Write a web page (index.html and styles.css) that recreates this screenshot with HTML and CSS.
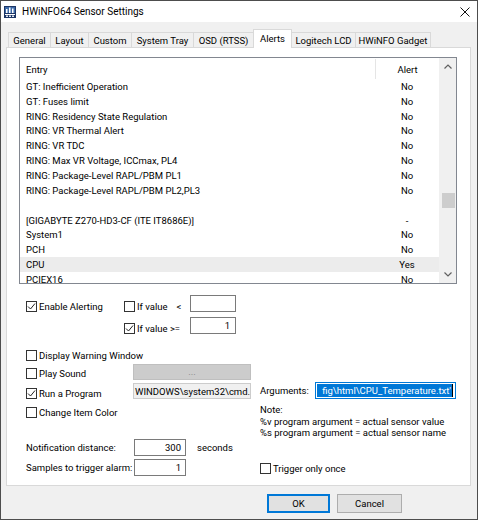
FILE: index.html
```html
<!DOCTYPE html>
<html lang="en">
<head>
<meta charset="utf-8">
<title>HWiNFO64 Sensor Settings</title>
<link rel="stylesheet" href="styles.css">
</head>
<body>
<div class="window">
  <div class="titlebar">
    <svg class="app-icon" width="12" height="12" viewBox="0 0 12 12">
      <rect x="0" y="0" width="12" height="12" fill="#1c3565"/>
      <rect x="1" y="1" width="10" height="6" fill="#3d6aa8"/>
      <rect x="2" y="3" width="1.5" height="4" fill="#ffffff"/>
      <rect x="5" y="1.5" width="1.5" height="5.5" fill="#ffffff"/>
      <rect x="8" y="2.5" width="1.5" height="4.5" fill="#ffffff"/>
      <rect x="1" y="8" width="10" height="1" fill="#ffffff"/>
      <rect x="2" y="9.5" width="2" height="1.5" fill="#dfe6f2"/>
      <rect x="5" y="9.5" width="2" height="1.5" fill="#dfe6f2"/>
      <rect x="8" y="9.5" width="2" height="1.5" fill="#dfe6f2"/>
    </svg>
    <span class="title">HWiNFO64 Sensor Settings</span>
    <svg class="close" width="10" height="10" viewBox="0 0 10 10">
      <path d="M0.5 0.5 L9.5 9.5 M9.5 0.5 L0.5 9.5" stroke="#111" stroke-width="1" fill="none"/>
    </svg>
  </div>

  <div class="tabs">
    <div class="tab t-general">General</div>
    <div class="tab t-layout">Layout</div>
    <div class="tab t-custom">Custom</div>
    <div class="tab t-tray">System Tray</div>
    <div class="tab t-osd">OSD (RTSS)</div>
    <div class="tab active t-alerts">Alerts</div>
    <div class="tab after-active t-lcd">Logitech LCD</div>
    <div class="tab last t-gadget">HWiNFO Gadget</div>
  </div>

  <div class="panel">
    <div class="list">
      <div class="list-main">
        <div class="list-header">
          <div class="col-entry">Entry</div>
          <div class="col-alert">Alert</div>
        </div>
        <div class="row"><div class="col-entry">GT: Inefficient Operation</div><div class="col-alert">No</div></div>
        <div class="row"><div class="col-entry">GT: Fuses limit</div><div class="col-alert">No</div></div>
        <div class="row"><div class="col-entry">RING: Residency State Regulation</div><div class="col-alert">No</div></div>
        <div class="row"><div class="col-entry">RING: VR Thermal Alert</div><div class="col-alert">No</div></div>
        <div class="row"><div class="col-entry">RING: VR TDC</div><div class="col-alert">No</div></div>
        <div class="row"><div class="col-entry">RING: Max VR Voltage, ICCmax, PL4</div><div class="col-alert">No</div></div>
        <div class="row"><div class="col-entry">RING: Package-Level RAPL/PBM PL1</div><div class="col-alert">No</div></div>
        <div class="row"><div class="col-entry">RING: Package-Level RAPL/PBM PL2,PL3</div><div class="col-alert">No</div></div>
        <div class="row"><div class="col-entry"></div><div class="col-alert"></div></div>
        <div class="row"><div class="col-entry">[GIGABYTE Z270-HD3-CF (ITE IT8686E)]</div><div class="col-alert">-</div></div>
        <div class="row"><div class="col-entry">System1</div><div class="col-alert">No</div></div>
        <div class="row"><div class="col-entry">PCH</div><div class="col-alert">No</div></div>
        <div class="row current"><div class="col-entry">CPU</div><div class="col-alert">Yes</div></div>
        <div class="row"><div class="col-entry">PCIEX16</div><div class="col-alert">No</div></div>
      </div>
      <div class="vscroll">
        <div class="sb-btn">
          <svg width="8" height="5" viewBox="0 0 8 5"><polyline points="0.5,4.5 4,1 7.5,4.5" fill="none" stroke="#606060" stroke-width="1.2"/></svg>
        </div>
        <div class="sb-track"><div class="sb-thumb"></div></div>
        <div class="sb-btn">
          <svg width="8" height="5" viewBox="0 0 8 5"><polyline points="0.5,0.5 4,4 7.5,0.5" fill="none" stroke="#606060" stroke-width="1.2"/></svg>
        </div>
      </div>
    </div>

    <div class="alert-cond">
      <div class="cond-row">
        <label class="chk w-enable"><span class="box"><svg width="9" height="9" viewBox="0 0 9 9"><polyline points="1,4.5 3.5,7 8,1.5" fill="none" stroke="#222" stroke-width="1"/></svg></span>Enable Alerting</label>
        <label class="chk w-if"><span class="box"></span>If value<span class="lt">&lt;</span></label>
        <div class="edit w-val"></div>
      </div>
      <div class="cond-row">
        <div class="w-enable"></div>
        <label class="chk w-if"><span class="box"><svg width="9" height="9" viewBox="0 0 9 9"><polyline points="1,4.5 3.5,7 8,1.5" fill="none" stroke="#222" stroke-width="1"/></svg></span>If value &gt;=</label>
        <div class="edit w-val num">1</div>
      </div>
    </div>

    <div class="actions">
      <div class="actions-left">
        <div class="act-row r-c">
          <label class="chk w-act"><span class="box"></span>Display Warning Window</label>
        </div>
        <div class="act-row r-d">
          <label class="chk w-act"><span class="box"></span>Play Sound</label>
          <button class="btn-disabled" type="button">...</button>
        </div>
        <div class="act-row r-e">
          <label class="chk w-act"><span class="box"><svg width="9" height="9" viewBox="0 0 9 9"><polyline points="1,4.5 3.5,7 8,1.5" fill="none" stroke="#222" stroke-width="1"/></svg></span>Run a Program</label>
          <div class="readonly">WINDOWS\system32\cmd.exe</div>
        </div>
        <div class="act-row r-f">
          <label class="chk w-act"><span class="box"></span>Change Item Color</label>
        </div>
      </div>
      <div class="actions-right">
        <div class="args-row">
          <span class="args-label">Arguments:</span>
          <div class="edit args"><span class="arg-sel">fig\html\CPU_Temperature.txt'</span><span class="caret"></span></div>
        </div>
        <div class="note">Note:<br>%v program argument = actual sensor value<br>%s program argument = actual sensor name</div>
      </div>
    </div>

    <div class="notify">
      <div class="notify-left">
        <div class="num-row">
          <span class="num-label">Notification distance:</span>
          <div class="edit w-num num">300</div>
          <span class="unit">seconds</span>
        </div>
        <div class="num-row">
          <span class="num-label">Samples to trigger alarm:</span>
          <div class="edit w-num num">1</div>
        </div>
      </div>
      <div class="notify-right">
        <label class="chk"><span class="box"></span>Trigger only once</label>
      </div>
    </div>
  </div>

  <div class="buttons">
    <button class="btn btn-ok default" type="button">OK</button>
    <button class="btn btn-cancel" type="button">Cancel</button>
  </div>
</div>
</body>
</html>
```

FILE: styles.css
```css
* { box-sizing: border-box; }

html, body {
  margin: 0;
  padding: 0;
  background: #f0f0f0;
}

body {
  font-family: Roboto, "Liberation Sans", Arial, sans-serif;
  font-size: 9.5px;
  color: #000;
}

.window {
  width: 478px;
  height: 520px;
  border: 1px solid #4d4d4d;
  background: #f0f0f0;
  display: flex;
  flex-direction: column;
}

/* title bar */
.titlebar {
  height: 21px;
  background: #fff;
  display: flex;
  align-items: center;
  padding-left: 3px;
  flex: none;
}
.app-icon { flex: none; display: block; }
.title {
  margin-left: 6px;
  font-size: 10px;
}
.close {
  margin-left: auto;
  margin-right: 7px;
  display: block;
}

/* tabs */
.tabs {
  margin-top: 7px;
  height: 18px;
  padding-left: 7px;
  display: flex;
  align-items: flex-end;
  flex: none;
}
.tab {
  height: 15px;
  border: 1px solid #d9d9d9;
  border-bottom: none;
  border-right: none;
  background: #f0f0f0;
  display: flex;
  align-items: center;
  justify-content: center;
  white-space: nowrap;
}
.tab.active {
  height: 19px;
  margin-bottom: -1px;
  background: #fff;
  border-right: 1px solid #d9d9d9;
  padding-bottom: 2px;
  position: relative;
  z-index: 1;
}
.tab.after-active { border-left: none; }
.tab.last { border-right: 1px solid #d9d9d9; }
.t-general { width: 42px; }
.t-layout { width: 38px; }
.t-custom { width: 43px; }
.t-tray { width: 62px; }
.t-osd { width: 60px; }
.t-alerts { width: 39px; }
.t-lcd { width: 63px; }
.t-gadget { width: 76px; }

/* page */
.panel {
  margin-left: 5px;
  width: 465px;
  height: 439px;
  border: 1px solid #d9d9d9;
  background: #fff;
  padding: 9px 0 0 12px;
  flex: none;
}

/* list view */
.list {
  width: 438px;
  height: 227px;
  border: 1px solid #828790;
  display: flex;
  background: #fff;
}
.list-main {
  flex: 1;
  overflow: hidden;
}
.list-header {
  height: 21px;
  display: flex;
}
.list-header .col-entry,
.list-header .col-alert {
  display: flex;
  align-items: center;
  padding-top: 2px;
}
.list-header .col-alert {
  justify-content: center;
  border-left: 1px solid #e5e5e5;
  margin-top: 1px;
  padding-top: 1px;
}
.row {
  height: 14.85px;
  display: flex;
  align-items: center;
}
.row.current { background: #ececec; }
.col-entry {
  width: 355px;
  padding-left: 6px;
  white-space: nowrap;
  overflow: hidden;
}
.col-alert {
  width: 64px;
  text-align: center;
}
.vscroll {
  width: 17px;
  background: #f0f0f0;
  display: flex;
  flex-direction: column;
  flex: none;
}
.sb-btn {
  height: 17px;
  display: flex;
  align-items: center;
  justify-content: center;
}
.sb-btn svg { display: block; }
.sb-track { flex: 1; }
.sb-thumb {
  margin: 118px 1px 0 3px;
  height: 15px;
  background: #cdcdcd;
}

/* checkboxes */
.chk {
  display: flex;
  align-items: center;
  gap: 2px;
  height: 11px;
  white-space: nowrap;
}
.box {
  width: 11px;
  height: 11px;
  border: 1px solid #333;
  background: #fff;
  display: flex;
  align-items: center;
  justify-content: center;
  flex: none;
}
.box svg { display: block; }

/* edit fields */
.edit {
  height: 17px;
  border: 1px solid #7a7a7a;
  background: #fff;
  display: flex;
  align-items: center;
  padding: 0 5px;
  white-space: nowrap;
  flex: none;
}
.edit.num { justify-content: flex-end; }

/* alert conditions */
.alert-cond {
  margin: 11px 0 0 7px;
}
.cond-row {
  display: flex;
  align-items: flex-start;
  height: 17px;
}
.cond-row + .cond-row { margin-top: 5px; }
.cond-row .chk { margin-top: 6px; }
.w-enable { width: 98px; flex: none; }
.w-if { width: 66px; flex: none; }
.lt { margin-left: 7px; }
.w-val { width: 46px; }

/* actions */
.actions {
  display: flex;
  margin: 12px 0 0 7px;
}
.actions-left {
  width: 234px;
  flex: none;
}
.act-row {
  display: flex;
  align-items: center;
}
.r-c { height: 18px; }
.r-d { height: 18px; }
.r-e { height: 22px; }
.r-f { height: 16px; }
.w-act { width: 107px; flex: none; }

.btn-disabled {
  align-self: flex-start;
  width: 118px;
  height: 16px;
  padding: 0;
  margin: 0;
  border: 1px solid #bfbfbf;
  background: #cccccc;
  color: #838383;
  font: inherit;
  line-height: 12px;
}
.readonly {
  align-self: flex-start;
  margin-top: 1px;
  width: 118px;
  height: 16px;
  border: 1px solid #cccccc;
  background: #f0f0f0;
  padding-left: 1px;
  display: flex;
  align-items: center;
  white-space: nowrap;
  overflow: hidden;
}

.actions-right {
  padding-top: 36px;
  display: flex;
  flex-direction: column;
}
.args-row {
  display: flex;
  align-items: center;
  height: 17px;
}
.args-label { width: 55px; flex: none; }
.edit.args {
  width: 141px;
  border-color: #0078d7;
  padding: 0 2px 0 1px;
}
.arg-sel {
  flex: 1;
  min-width: 0;
  height: 13px;
  background: #0078d7;
  color: #fff;
  display: flex;
  align-items: center;
  justify-content: flex-end;
  padding-right: 1px;
  overflow: hidden;
  white-space: nowrap;
}
.caret {
  width: 1px;
  height: 13px;
  background: #000;
  flex: none;
}
.note {
  margin-top: 5px;
  line-height: 11.5px;
  white-space: nowrap;
}

/* notification */
.notify {
  display: flex;
  margin-left: 7px;
}
.notify-left {
  width: 234px;
  flex: none;
}
.num-row {
  display: flex;
  align-items: center;
  height: 17px;
}
.num-row + .num-row { margin-top: 3px; }
.num-label { width: 108px; flex: none; white-space: nowrap; }
.w-num { width: 52px; padding-right: 4px; }
.unit { margin-left: 11px; }
.notify-right {
  padding-top: 24px;
}

/* dialog buttons */
.buttons {
  display: flex;
  justify-content: flex-end;
  gap: 7px;
  margin-top: 8px;
  padding-right: 75px;
  flex: none;
}
.btn {
  height: 19px;
  padding: 0;
  margin: 0;
  border: 1px solid #adadad;
  background: #e1e1e1;
  color: #000;
  font: inherit;
}
.btn.default {
  border-color: #0078d7;
  box-shadow: inset 0 0 0 1px #0078d7;
}
.btn-ok { width: 63px; }
.btn-cancel { width: 65px; }
```
